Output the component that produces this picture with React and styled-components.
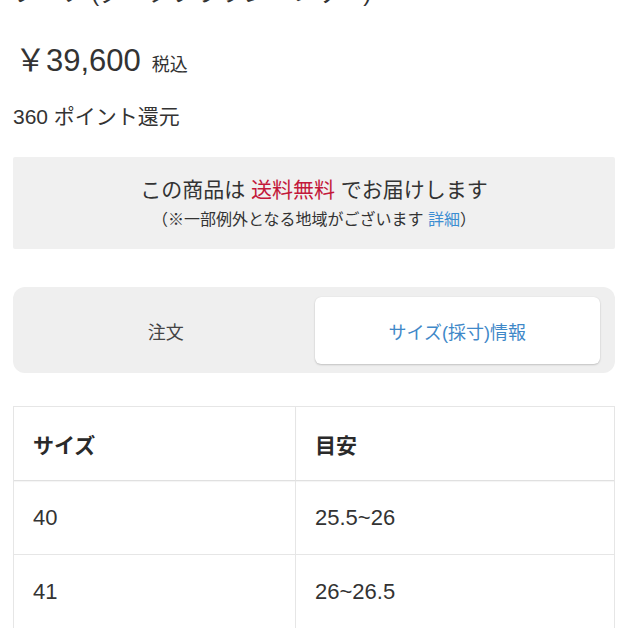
import React from "react";
import styled, { createGlobalStyle } from "styled-components";

const Global = createGlobalStyle`
  html, body { margin: 0; padding: 0; background: #fff; }
  body {
    font-family: "Liberation Sans", "Noto Sans CJK JP", sans-serif;
    color: #333;
  }
`;

const Page = styled.div`
  width: 628px;
  height: 628px;
  overflow: hidden;
  box-sizing: border-box;
  padding: 0 13px 0 13px;
`;

const Title = styled.h1`
  margin: -22px 0 0 0;
  font-size: 24px;
  line-height: 30px;
  font-weight: normal;
  color: #333;
  white-space: nowrap;
`;

const PriceRow = styled.div`
  display: flex;
  align-items: baseline;
  gap: 11px;
  margin-top: 33px;
  padding-left: 2px;
`;

const Price = styled.span`
  font-size: 31px;
  line-height: 40px;
`;

const Tax = styled.span`
  font-size: 18px;
`;

const Points = styled.div`
  margin-top: 22px;
  font-size: 21px;
  line-height: 28px;
`;

const ShippingBox = styled.div`
  margin-top: 26px;
  background: #f0f0f0;
  border-radius: 2px;
  height: 92px;
  display: flex;
  flex-direction: column;
  align-items: center;
  justify-content: center;
  gap: 6px;
`;

const ShipMain = styled.div`
  font-size: 21px;
  line-height: 28px;
`;

const ShipNote = styled.div`
  font-size: 16px;
  line-height: 20px;
`;

const Red = styled.span`
  color: #c3183a;
`;

const Link = styled.span`
  color: #3d8ed2;
`;

const Tabs = styled.div`
  margin-top: 38px;
  background: #efefef;
  border-radius: 12px;
  height: 86px;
  box-sizing: border-box;
  padding: 10px 15px 9px 10px;
  display: grid;
  grid-template-columns: 1fr 1fr;
  gap: 6px;
`;

const Tab = styled.div`
  display: flex;
  align-items: center;
  justify-content: center;
  font-size: 18px;
  border-radius: 6px;
  background: ${(p) => (p.$active ? "#fff" : "transparent")};
  color: ${(p) => (p.$active ? "#3f88c8" : "#444")};
  box-shadow: ${(p) =>
    p.$active ? "0 1px 2px rgba(0,0,0,0.18), 0 0 1px rgba(0,0,0,0.12)" : "none"};
`;

const Table = styled.div`
  margin-top: 33px;
  border: 1px solid #e6e6e6;
  display: grid;
  grid-template-columns: 282px 1fr;
`;

const Cell = styled.div`
  height: 73px;
  display: flex;
  align-items: center;
  padding-left: 19px;
  font-size: 22px;
  font-weight: ${(p) => (p.$head ? "bold" : "normal")};
  color: ${(p) => (p.$head ? "#2a2a2a" : "#333")};
  border-right: ${(p) => (p.$first ? "1px solid #e6e6e6" : "none")};
  border-bottom: 1px solid ${(p) => (p.$head ? "#e0e0e0" : "#e6e6e6")};
  box-shadow: ${(p) => (p.$head ? "0 1px 1px rgba(0,0,0,0.04)" : "none")};
`;

const HeadText = styled.span`
  font-size: 21px;
`;

const rows = [
  ["40", "25.5~26"],
  ["41", "26~26.5"],
];

export default function App() {
  return (
    <>
      <Global />
      <Page>
        <Title>ブーツ (ダークブラウン・レザー)</Title>
        <PriceRow>
          <Price>￥39,600</Price>
          <Tax>税込</Tax>
        </PriceRow>
        <Points>360 ポイント還元</Points>
        <ShippingBox>
          <ShipMain>
            この商品は <Red>送料無料</Red> でお届けします
          </ShipMain>
          <ShipNote>
            （※一部例外となる地域がございます <Link>詳細</Link>）
          </ShipNote>
        </ShippingBox>
        <Tabs>
          <Tab>注文</Tab>
          <Tab $active>サイズ(採寸)情報</Tab>
        </Tabs>
        <Table>
          <Cell $head $first>
            <HeadText>サイズ</HeadText>
          </Cell>
          <Cell $head>
            <HeadText>目安</HeadText>
          </Cell>
          {rows.map(([s, g]) => (
            <React.Fragment key={s}>
              <Cell $first>{s}</Cell>
              <Cell>{g}</Cell>
            </React.Fragment>
          ))}
        </Table>
      </Page>
    </>
  );
}
